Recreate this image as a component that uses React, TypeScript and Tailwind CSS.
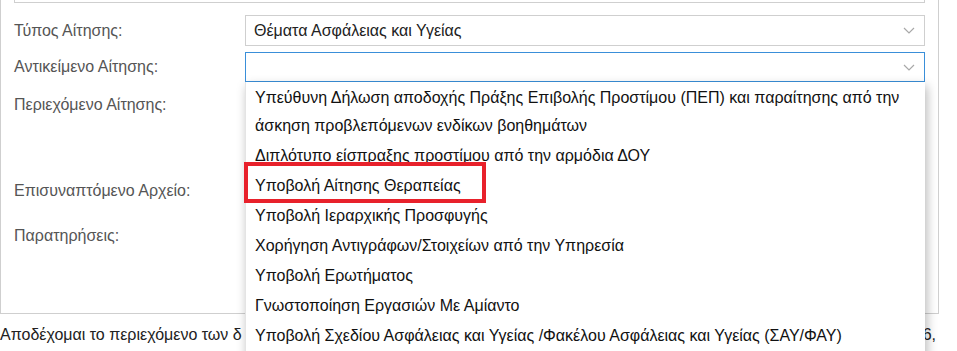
const items: string[] = [
  'Υπεύθυνη Δήλωση αποδοχής Πράξης Επιβολής Προστίμου (ΠΕΠ) και παραίτησης από την άσκηση προβλεπόμενων ενδίκων βοηθημάτων',
  'Διπλότυπο είσπραξης προστίμου από την αρμόδια ΔΟΥ',
  'Υποβολή Αίτησης Θεραπείας',
  'Υποβολή Ιεραρχικής Προσφυγής',
  'Χορήγηση Αντιγράφων/Στοιχείων από την Υπηρεσία',
  'Υποβολή Ερωτήματος',
  'Γνωστοποίηση Εργασιών Με Αμίαντο',
  'Υποβολή Σχεδίου Ασφάλειας και Υγείας /Φακέλου Ασφάλειας και Υγείας (ΣΑΥ/ΦΑΥ)',
]

function Chevron() {
  return (
    <svg width="12" height="7" viewBox="0 0 12 7" className="shrink-0">
      <polyline points="1,1 6,6 11,1" fill="none" stroke="#a8a8a8" strokeWidth="1.2" />
    </svg>
  )
}

function Label({ children }: { children: React.ReactNode }) {
  return <div className="w-[231px] shrink-0 text-[16px] text-[#555]">{children}</div>
}

export default function App() {
  return (
    <div
      className="relative w-[957px] h-[351px] overflow-hidden bg-white"
      style={{ fontFamily: '"Liberation Sans", Arial, sans-serif' }}
    >
      {/* form panel */}
      <div className="w-[939px] h-[314px] border-x border-b border-[#cfcfcf] pl-[13px] pr-[13px]">
        <div className="h-[3px] border-x border-b border-[#cfcfcf]" />

        <div className="flex items-center mt-[12px]">
          <Label>Τύπος Αίτησης:</Label>
          <div className="flex-1 h-[31px] border border-[#cfcfcf] flex items-center justify-between pl-[8px] pr-[9px]">
            <span className="text-[16px] text-[#222]">Θέματα Ασφάλειας και Υγείας</span>
            <Chevron />
          </div>
        </div>

        <div className="flex items-center mt-[6px]">
          <Label>Αντικείμενο Αίτησης:</Label>
          <div className="flex-1 h-[30px] border border-[#3a8fd9] flex items-center justify-end pr-[9px]">
            <Chevron />
          </div>
        </div>

        <div className="flex mt-[11px] h-[86px]">
          <Label>Περιεχόμενο Αίτησης:</Label>
        </div>
        <div className="flex h-[45px]">
          <Label>Επισυναπτόμενο Αρχείο:</Label>
        </div>
        <div className="flex">
          <Label>Παρατηρήσεις:</Label>
        </div>
      </div>

      <div className="flex items-center justify-between mt-[9px] text-[16px] text-[#222] w-[939px]">
        <span className="whitespace-nowrap">Αποδέχομαι το περιεχόμενο των δ</span>
        <span className="pr-[3px]">6,</span>
      </div>

      {/* open dropdown list */}
      <div className="absolute left-[245px] top-[82px] w-[680px] h-[290px] bg-white shadow-[2px_4px_10px_rgba(0,0,0,0.28)] border-l border-[#e4e4e4]">
        <ul className="text-[16px] text-[#111] leading-[28px] pt-[1px]">
          {items.map((t) => (
            <li key={t} className="pl-[9px] pr-[12px] py-[1px]">
              {t}
            </li>
          ))}
        </ul>
      </div>

      {/* annotation */}
      <div className="absolute left-[244px] top-[162px] w-[242px] h-[41px] border-[4px] border-[#e8212b]" />
    </div>
  )
}
